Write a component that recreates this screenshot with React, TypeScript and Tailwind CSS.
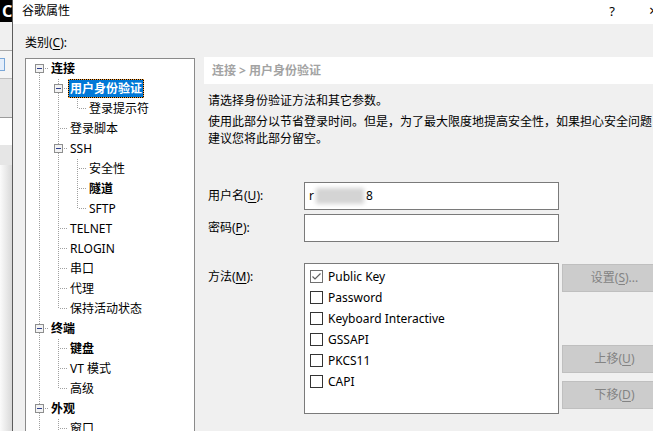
import type { ReactNode } from "react";

type TreeNode = { label: string; bold?: boolean; selected?: boolean; children?: TreeNode[] };
type Row = { node: TreeNode; guides: boolean[]; first: boolean; last: boolean };

const TREE: TreeNode[] = [
  {
    label: "连接",
    bold: true,
    children: [
      { label: "用户身份验证", bold: true, selected: true, children: [{ label: "登录提示符" }] },
      { label: "登录脚本" },
      { label: "SSH", children: [{ label: "安全性" }, { label: "隧道", bold: true }, { label: "SFTP" }] },
      { label: "TELNET" },
      { label: "RLOGIN" },
      { label: "串口" },
      { label: "代理" },
      { label: "保持活动状态" },
    ],
  },
  { label: "终端", bold: true, children: [{ label: "键盘", bold: true }, { label: "VT 模式" }, { label: "高级" }] },
  { label: "外观", bold: true, children: [{ label: "窗口" }, { label: "颜色" }] },
  { label: "日志文件" },
  { label: "打印" },
];

function flatten(nodes: TreeNode[], guides: boolean[], out: Row[]) {
  nodes.forEach((node, i) => {
    const last = i === nodes.length - 1;
    out.push({ node, guides, first: guides.length === 0 && i === 0, last });
    if (node.children) flatten(node.children, [...guides, !last], out);
  });
  return out;
}

const ROWS = flatten(TREE, [], []);
const DOT = "#a0a0a0";

function Guide({ on }: { on: boolean }) {
  return (
    <svg width="19" height="20" className="shrink-0" shapeRendering="crispEdges">
      {on && <line x1="9.5" y1="0" x2="9.5" y2="20" stroke={DOT} strokeDasharray="1 1" />}
    </svg>
  );
}

function Elbow({ first, last, expander }: { first: boolean; last: boolean; expander: boolean }) {
  return (
    <svg width="19" height="20" className="shrink-0" shapeRendering="crispEdges">
      {!first && <line x1="9.5" y1="0" x2="9.5" y2="10" stroke={DOT} strokeDasharray="1 1" />}
      {!last && <line x1="9.5" y1="10" x2="9.5" y2="20" stroke={DOT} strokeDasharray="1 1" />}
      <line x1={expander ? 15 : 11} y1="9.5" x2="19" y2="9.5" stroke={DOT} strokeDasharray="1 1" />
      {expander && (
        <>
          <rect x="5.5" y="5.5" width="8" height="8" fill="#f3f3f3" stroke="#8e8f8f" />
          <line x1="7" y1="9.5" x2="12" y2="9.5" stroke="#2c3e8c" />
        </>
      )}
    </svg>
  );
}

function TreeRow({ row }: { row: Row }) {
  const { node } = row;
  return (
    <div className="flex h-[20px] items-start whitespace-nowrap">
      {row.guides.map((g, i) => (
        <Guide key={i} on={g} />
      ))}
      <Elbow first={row.first} last={row.last} expander={!!node.children} />
      {node.selected ? (
        <span className="h-[19px] border border-dotted border-[#f7a13a] bg-black">
          <span className="block h-full bg-[#0078d7] px-[1px] font-bold leading-[17px] text-white">
            {node.label}
          </span>
        </span>
      ) : (
        <span className={`h-[19px] border border-transparent px-[1px] leading-[17px] ${node.bold ? "font-bold" : ""}`}>
          {node.label}
        </span>
      )}
    </div>
  );
}

function Mn({ children }: { children: ReactNode }) {
  return <span className="underline underline-offset-2">{children}</span>;
}

function Check({ checked }: { checked?: boolean }) {
  return (
    <span
      className={`flex h-[13px] w-[13px] shrink-0 items-center justify-center border bg-white ${
        checked ? "border-[#707070]" : "border-[#333333]"
      }`}
    >
      {checked && (
        <svg width="11" height="11" viewBox="0 0 11 11">
          <polyline points="1.5,5.5 4,8 9.5,2.5" fill="none" stroke="#5f5f5f" strokeWidth="1.2" />
        </svg>
      )}
    </span>
  );
}

const METHODS = [
  { name: "Public Key", on: true },
  { name: "Password" },
  { name: "Keyboard Interactive" },
  { name: "GSSAPI" },
  { name: "PKCS11" },
  { name: "CAPI" },
];

function Btn({ children, className = "" }: { children: ReactNode; className?: string }) {
  return (
    <div
      className={`flex h-[28px] w-[105px] items-center justify-center border border-[#bfbfbf] bg-[#cccccc] text-[#838383] ${className}`}
    >
      {children}
    </div>
  );
}

export default function App() {
  return (
    <div className="flex h-[431px] w-[653px] overflow-hidden bg-white font-['Noto_Sans','Noto_Sans_CJK_SC',sans-serif] text-[12px] text-black">
      {/* window behind the dialog */}
      <div className="flex w-[12px] shrink-0 flex-col overflow-hidden bg-gradient-to-r from-[#fbfbfb] to-[#d9d9d9]">
        <div className="h-[22px] overflow-hidden bg-black pl-[2px] text-[16px] font-bold leading-[22px] text-white">C</div>
        <div className="h-[28px] bg-[#f0f0f0]" />
        <div className="h-[1px] bg-[#a8a8a8]" />
        <div className="flex h-[27px] items-center bg-[#f4f4f4]">
          <div className="h-[13px] w-[5px] border border-l-0 border-[#7aa7d8] bg-[#e4eefb]" />
        </div>
        <div className="h-[1px] bg-[#c0c0c0]" />
        <div className="h-[38px] bg-[#e4e4e4]" />
        <div className="h-[1px] bg-[#9c9c9c]" />
        <div className="h-[27px] bg-white" />
        <div className="h-[20px] bg-[#e6e6e6]" />
        <div className="flex-1" />
      </div>
      <div className="w-[1px] shrink-0 bg-[#5c5c5c]" />

      {/* dialog */}
      <div className="flex min-w-0 flex-1 flex-col overflow-hidden">
        <div className="flex h-[24px] shrink-0 items-start bg-white pl-[9px] pt-[1px] leading-[20px]">
          <span>谷歌属性</span>
          <span className="ml-auto mr-[34px] text-[13px]">?</span>
          <span className="w-[4px] overflow-hidden text-[15px] leading-[19px]">×</span>
        </div>

        <div className="flex flex-1 bg-[#f0f0f0] pl-[12px]">
          <div className="flex w-[170px] shrink-0 flex-col pt-[11px]">
            <div className="h-[16px] leading-[16px]">
              类别(<Mn>C</Mn>):
            </div>
            <div className="mt-[7px] flex-1 overflow-hidden border border-[#8a8a8a] bg-white pl-[4px]">
              {ROWS.map((r, i) => (
                <TreeRow key={i} row={r} />
              ))}
            </div>
          </div>

          <div className="ml-[9px] flex w-[470px] shrink-0 flex-col pt-[33px]">
            <div className="flex h-[27px] items-center bg-white pl-[8px] font-bold text-[#a3a3a3]">
              连接 &gt; 用户身份验证
            </div>
            <div className="pl-[4px]">
              <p className="mt-[8px] leading-[17px]">请选择身份验证方法和其它参数。</p>
              <p className="mt-[4px] whitespace-nowrap leading-[17px]">
                使用此部分以节省登录时间。但是，为了最大限度地提高安全性，如果担心安全问题，
                <br />
                建议您将此部分留空。
              </p>

              <div className="mt-[35px] flex items-center">
                <span className="w-[96px]">
                  用户名(<Mn>U</Mn>):
                </span>
                <div className="flex h-[28px] w-[255px] items-center border border-[#7a7a7a] bg-white pl-[4px]">
                  <span>r</span>
                  <span className="mx-[2px] h-[16px] w-[48px] bg-[#d4d4d4] blur-[2px]" />
                  <span>8</span>
                </div>
              </div>

              <div className="mt-[4px] flex items-center">
                <span className="w-[96px]">
                  密码(<Mn>P</Mn>):
                </span>
                <div className="h-[28px] w-[255px] border border-[#7a7a7a] bg-white" />
              </div>

              <div className="mt-[21px] flex items-start">
                <span className="w-[96px] pt-[6px] leading-[16px]">
                  方法(<Mn>M</Mn>):
                </span>
                <div className="h-[151px] w-[255px] border border-[#7a7a7a] bg-white pl-[5px] pt-[2px]">
                  {METHODS.map((m) => (
                    <div key={m.name} className="flex h-[21px] items-center gap-[5px] whitespace-nowrap">
                      <Check checked={m.on} />
                      <span>{m.name}</span>
                    </div>
                  ))}
                </div>
                <div className="ml-[3px] flex flex-col">
                  <Btn className="mt-[1px]">
                    设置(<Mn>S</Mn>)...
                  </Btn>
                  <Btn className="mt-[53px]">
                    上移(<Mn>U</Mn>)
                  </Btn>
                  <Btn className="mt-[8px]">
                    下移(<Mn>D</Mn>)
                  </Btn>
                </div>
              </div>
            </div>
          </div>
        </div>
      </div>
    </div>
  );
}
